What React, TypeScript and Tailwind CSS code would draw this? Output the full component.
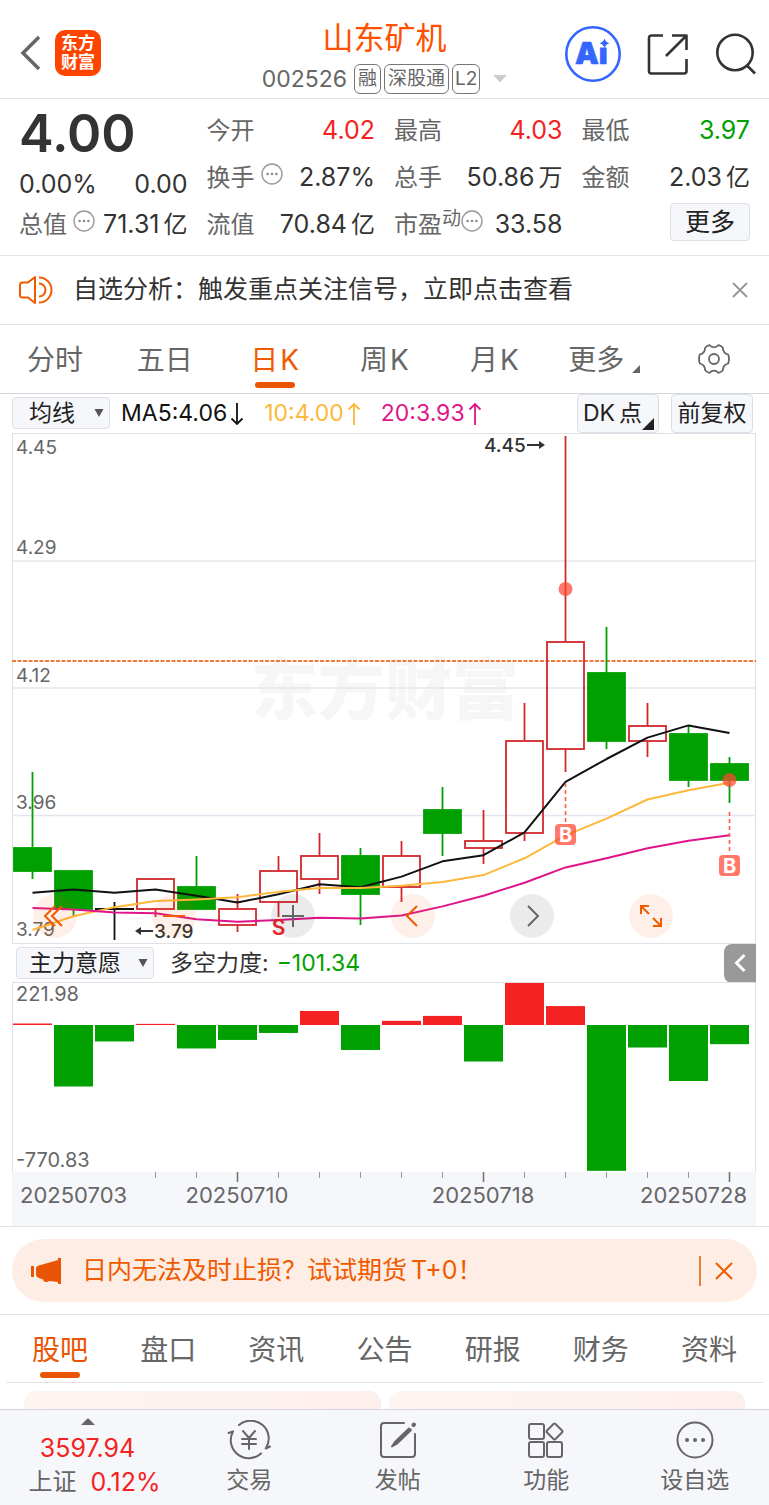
import { useState } from "react";
import type { ReactNode } from "react";

interface Candle {
  open: number;
  close: number;
  high: number;
  low: number;
}

const candles: Candle[] = [
  { open: 3.91, close: 3.88, high: 4.01, low: 3.87 },
  { open: 3.88, close: 3.83, high: 3.88, low: 3.82 },
  { open: 3.83, close: 3.83, high: 3.84, low: 3.79 },
  { open: 3.83, close: 3.87, high: 3.87, low: 3.82 },
  { open: 3.86, close: 3.83, high: 3.9, low: 3.83 },
  { open: 3.81, close: 3.83, high: 3.85, low: 3.8 },
  { open: 3.84, close: 3.88, high: 3.9, low: 3.82 },
  { open: 3.87, close: 3.9, high: 3.93, low: 3.85 },
  { open: 3.9, close: 3.85, high: 3.91, low: 3.81 },
  { open: 3.86, close: 3.9, high: 3.92, low: 3.84 },
  { open: 3.96, close: 3.93, high: 3.99, low: 3.9 },
  { open: 3.91, close: 3.92, high: 3.96, low: 3.89 },
  { open: 3.93, close: 4.05, high: 4.1, low: 3.92 },
  { open: 4.04, close: 4.18, high: 4.45, low: 4.01 },
  { open: 4.14, close: 4.05, high: 4.2, low: 4.04 },
  { open: 4.05, close: 4.07, high: 4.1, low: 4.03 },
  { open: 4.06, close: 4.0, high: 4.07, low: 3.99 },
  { open: 4.02, close: 4.0, high: 4.03, low: 3.97 },
];

const ma5 = [3.852, 3.856, 3.852, 3.856, 3.848, 3.839, 3.85, 3.863, 3.859, 3.873, 3.893, 3.901, 3.931, 3.997, 4.027, 4.055, 4.071, 4.061];
const ma10 = [3.803, 3.821, 3.833, 3.841, 3.843, 3.846, 3.853, 3.858, 3.858, 3.861, 3.866, 3.875, 3.897, 3.927, 3.949, 3.974, 3.986, 3.996];
const ma20 = [3.832, 3.83, 3.826, 3.825, 3.817, 3.814, 3.816, 3.819, 3.818, 3.822, 3.834, 3.848, 3.865, 3.885, 3.897, 3.91, 3.92, 3.927];

const forces = [8, -325, -87, 6, -124, -79, -42, 74, -132, 22, 48, -193, 221.98, 100, -770.83, -119, -296, -101.34];

const periods = ["分时", "五日", "日K", "周K", "月K"];
const sections = ["股吧", "盘口", "资讯", "公告", "研报", "财务", "资料"];

const xAt = (i: number) => 20 + i * 41;
const priceY = (p: number) => Math.round(3 + (4.45 - p) * 763.6);
const linePoints = (data: number[]) =>
  data.map((p, i) => `${xAt(i) + 0.5},${3 + (4.45 - p) * 763.6}`).join(" ");

function MoreDots() {
  return (
    <svg className="mb-2 h-[22px] w-[22px] shrink-0" viewBox="0 0 22 22" aria-hidden="true">
      <circle cx="11" cy="11" r="10" fill="none" stroke="#999" strokeWidth="1.4" />
      <circle cx="6.6" cy="11" r="1.3" fill="#888" />
      <circle cx="11" cy="11" r="1.3" fill="#888" />
      <circle cx="15.4" cy="11" r="1.3" fill="#888" />
    </svg>
  );
}

function MaArrow({ down = false }: { down?: boolean }) {
  return (
    <svg className="h-6 w-[17px]" viewBox="0 0 17 24" fill="none" stroke="currentColor" strokeWidth="1.8" aria-hidden="true">
      {down ? <path d="M10 1v21M4.500 16.500l5.500 5.500 5.500-5.500" /> : <path d="M10 23V2M4.500 7.500L10 2l5.500 5.500" />}
    </svg>
  );
}

interface StatProps {
  label: string;
  value: string;
  unit?: string;
  sup?: string;
  dots?: boolean;
  color?: string;
}

function Stat({ label, value, unit, sup, dots, color = "text-[#333]" }: StatProps) {
  return (
    <div className="flex h-[47px] items-center justify-between whitespace-nowrap">
      <span className="flex items-center text-[#666]">
        {label}
        {sup && <span className="mb-3 text-[19px] leading-6">{sup}</span>}
        {dots && <span className={sup ? "" : "ml-1.5"}><MoreDots /></span>}
      </span>
      <span className={`text-[25px] ${color}`}>
        {value}
        {unit && <span className="ml-1 text-[24px]">{unit}</span>}
      </span>
    </div>
  );
}

interface DropdownProps {
  label: string;
  options: string[];
  className: string;
}

function Dropdown({ label, options, className }: DropdownProps) {
  return (
    <div className="relative">
      <select
        aria-label={label}
        className={`h-8 appearance-none rounded border border-[#dcdfe6] bg-[#f6f7fa] text-[23px] leading-[30px] text-[#222] ${className}`}
      >
        {options.map((o) => (
          <option key={o}>{o}</option>
        ))}
      </select>
      <svg className="pointer-events-none absolute right-1.5 top-3 h-2.5 w-2.5" viewBox="0 0 10 10" aria-hidden="true">
        <path d="M0.500 1h9L5 9z" fill="#555" />
      </svg>
    </div>
  );
}

function KLineChart() {
  return (
    <svg className="block h-auto w-full" viewBox="0 0 745 511" role="img" aria-label="日K线图">
      <text x="239" y="281" fontSize="67" fontWeight="900" fill="#f6f6f7">东方财富</text>
      <g stroke="#e3e6ee" strokeWidth="1.500" fill="none">
        <rect x="0.500" y="0.500" width="743" height="510" stroke="#dfe1e6" strokeWidth="1" />
        <path d="M0 128H744M0 255H744M0 382.500H744" />
      </g>
      <path d="M0 228H744" stroke="#ee7a3c" strokeWidth="1.800" strokeDasharray="4 1.500" />

      <g fontSize="19" fill="#666">
        <text x="4" y="21">4.45</text>
        <text x="4" y="121">4.29</text>
        <text x="4" y="249">4.12</text>
        <text x="4" y="376">3.96</text>
        <text x="4" y="503">3.79</text>
      </g>

      {candles.map((c, i) => {
        const x = xAt(i);
        const top = priceY(Math.max(c.open, c.close));
        const bottom = priceY(Math.min(c.open, c.close));
        if (c.open === c.close) {
          return (
            <path key={i} d={`M${x - 19} ${top}h39M${x + 0.5} ${priceY(c.high)}V${priceY(c.low)}`} stroke="#111" strokeWidth="1.800" />
          );
        }
        const up = c.close > c.open;
        const color = up ? "#d2282c" : "#00a000";
        return (
          <g key={i} stroke={color} strokeWidth="1.800">
            <path d={`M${x + 0.5} ${priceY(c.high)}V${top}M${x + 0.5} ${bottom}V${priceY(c.low)}`} />
            <rect x={x - 18} y={top} width="37" height={bottom - top} fill={up ? "none" : color} />
          </g>
        );
      })}

      <g fill="none" strokeWidth="2" strokeLinejoin="round">
        <polyline points={linePoints(ma5)} stroke="#111" />
        <polyline points={linePoints(ma10)} stroke="#fdb83a" />
        <polyline points={linePoints(ma20)} stroke="#e0148a" />
      </g>

      {/* buy and sell signals */}
      <g stroke="#ff5a45" strokeWidth="1.600" strokeDasharray="4 3">
        <path d="M553.500 350V391M717.500 379V420" />
      </g>
      <g fill="#ff4530" fillOpacity="0.720">
        <circle cx="553.500" cy="156" r="7" />
        <circle cx="717.500" cy="347" r="7" />
        <rect x="543" y="391" width="21" height="21" rx="4" />
        <rect x="707" y="422" width="21" height="21" rx="4" />
      </g>
      <g fontSize="20" fontWeight="700" fill="#fff" textAnchor="middle">
        <text x="553.500" y="409">B</text>
        <text x="717.500" y="440">B</text>
      </g>
      <text x="266.500" y="502" fontSize="21" fontWeight="600" fill="#f5222d" textAnchor="middle">S</text>

      {/* high and low marks */}
      <g fontSize="19" fontWeight="500" fill="#333">
        <text x="472" y="19">4.45</text>
        <text x="142" y="505">3.79</text>
      </g>
      <g stroke="#333" strokeWidth="1.800">
        <path d="M515 12h12M128 498h13" />
        <path d="M533 12l-6-4v8zM123 498l6-4v8z" fill="#333" strokeWidth="0" />
      </g>
    </svg>
  );
}

function ForceChart() {
  const zero = 43;
  const scale = 0.1892;
  return (
    <svg className="block h-auto w-full" viewBox="0 0 745 244" role="img" aria-label="多空力度">
      <path d="M0.500 190V0.500H743.500V190" fill="none" stroke="#dfe1e6" />
      <rect x="0" y="190" width="744" height="54" fill="#f6f7fa" />
      {forces.map((f, i) => {
        const h = Math.abs(f) * scale;
        return (
          <rect key={i} x={xAt(i) - 19} y={f > 0 ? zero - h : zero} width="39" height={h} fill={f > 0 ? "#f42222" : "#00a000"} />
        );
      })}
      {forces.map((_, i) =>
        i < 3 ? null : (
          <path key={i} d={`M${xAt(i) + 0.5} 190v${i % 6 === 5 ? 10 : 6}`} stroke={i % 6 === 5 ? "#777" : "#999"} strokeWidth={i % 6 === 5 ? 1.6 : 1} />
        )
      )}
      <g fontSize="20" fill="#666">
        <text x="4" y="19">221.98</text>
        <text x="4" y="185">-770.83</text>
      </g>
      <g fontSize="22" fill="#666">
        <text x="8" y="221">20250703</text>
        <text x="225" y="221" textAnchor="middle">20250710</text>
        <text x="471" y="221" textAnchor="middle">20250718</text>
        <text x="735" y="221" textAnchor="end">20250728</text>
      </g>
    </svg>
  );
}

function ChartTool({ name, gray = false, children }: { name: string; gray?: boolean; children: ReactNode }) {
  return (
    <button
      aria-label={name}
      className={`flex h-11 w-11 items-center justify-center rounded-full ${gray ? "bg-black/8 text-[#666]" : "bg-[#f05a00]/9 text-[#f05a00]"}`}
    >
      <svg className="h-6 w-6" viewBox="0 0 24 24" fill="none" stroke="currentColor" strokeWidth="2">
        {children}
      </svg>
    </button>
  );
}

function NavItem({ label, children }: { label: string; children: ReactNode }) {
  return (
    <button className="flex flex-col items-center pt-2.5">
      <svg className="h-10 w-11" viewBox="0 0 44 40" fill="none" stroke="#666" strokeWidth="2" strokeLinecap="round" strokeLinejoin="round">
        {children}
      </svg>
      <span className="mt-1 text-[23px] leading-8 text-[#666]">{label}</span>
    </button>
  );
}

export default function App() {
  const [period, setPeriod] = useState("日K");
  const [section, setSection] = useState("股吧");

  return (
    <div className="w-full bg-white font-['Inter','Noto_Sans_CJK_SC',sans-serif] text-[24px] text-[#333]">
      {/* Header */}
      <header className="grid h-[99px] grid-cols-[1fr_auto_1fr] border-b border-[#e4e4e6]">
        <div className="flex items-center gap-3.5 pl-5 pt-2">
          <button aria-label="返回">
            <svg className="h-9 w-[21px]" viewBox="0 0 21 36" fill="none" stroke="#666" strokeWidth="3.500">
              <path d="M19 2L3 18l16 16" />
            </svg>
          </button>
          <a href="#home" className="flex h-[46px] w-[46px] flex-col items-center justify-center rounded-[10px] bg-[#ff4400] text-[17px] font-bold leading-[19px] text-white">
            <span>东方</span>
            <span>财富</span>
          </a>
        </div>
        <div className="flex flex-col items-center pt-4">
          <h1 className="text-[31px] leading-[44px] text-[#ff5000]">山东矿机</h1>
          <div className="flex items-center gap-[3px] whitespace-nowrap pt-1 text-[19px] leading-7 text-[#666]">
            <span className="mr-1 text-[23px]">002526</span>
            <span className="rounded-md border border-[#777] px-[3px]">融</span>
            <span className="rounded-md border border-[#777] px-[3px]">深股通</span>
            <span className="rounded-md border border-[#777] px-[2px]">L2</span>
            <svg className="ml-2.5 h-2 w-3.5" viewBox="0 0 14 8" aria-hidden="true">
              <path d="M0 0h14L7 7.500z" fill="#ccc" />
            </svg>
          </div>
        </div>
        <div className="flex items-center justify-end gap-[26px] pr-3 pt-2.5">
          <button aria-label="AI 助手">
            <svg className="h-14 w-14" viewBox="0 0 56 56">
              <circle cx="28" cy="28" r="26.700" fill="#fff" stroke="#3366ff" strokeWidth="2.600" />
              <text x="10" y="38" fontSize="30" fontWeight="900" fill="#3366ff" stroke="#3366ff" strokeWidth="0.600">Ai</text>
              <path d="M33 12h14v9.500H33z" fill="#fff" />
              <path d="M39.500 12.500q1 3.700 5 4.800-4 1.200-5 4.800-1-3.600-5-4.800 4-1.100 5-4.800z" fill="#3366ff" />
            </svg>
          </button>
          <button aria-label="分享">
            <svg className="h-[42px] w-[42px]" viewBox="0 0 42 42" fill="none" stroke="#333" strokeWidth="2.600" strokeLinejoin="round">
              <path d="M16 2.500H4.500Q2 2.500 2 5v33q0 2.500 2.500 2.500H37q2.500 0 2.500-2.500V26" />
              <path d="M25 2.500h14.500V17M39 3L19 23" />
            </svg>
          </button>
          <button aria-label="搜索">
            <svg className="h-[42px] w-[42px]" viewBox="0 0 42 42" fill="none" stroke="#333" strokeWidth="2.600">
              <circle cx="20" cy="19.500" r="17.700" />
              <path d="M31.500 32L40 40.500" />
            </svg>
          </button>
        </div>
      </header>

      {/* Quote */}
      <section className="grid grid-cols-4 gap-x-[19px] border-b border-[#e4e4e6] px-[19px] pb-[7px] pt-2">
        <div>
          <div className="h-[54px] text-[52px] font-semibold leading-[54px]">4.00</div>
          <div className="flex h-10 items-end justify-between pb-0.5 text-[25px] leading-[30px]">
            <span>0.00%</span>
            <span>0.00</span>
          </div>
          <Stat label="总值" value="71.31" unit="亿" dots />
        </div>
        <div>
          <Stat label="今开" value="4.02" color="text-[#f42222]" />
          <Stat label="换手" value="2.87%" dots />
          <Stat label="流值" value="70.84" unit="亿" />
        </div>
        <div>
          <Stat label="最高" value="4.03" color="text-[#f42222]" />
          <Stat label="总手" value="50.86" unit="万" />
          <Stat label="市盈" sup="动" value="33.58" dots />
        </div>
        <div>
          <Stat label="最低" value="3.97" color="text-[#00a000]" />
          <Stat label="金额" value="2.03" unit="亿" />
          <div className="flex h-[47px] items-center justify-end pb-1.5">
            <button className="h-[38px] w-20 rounded border border-[#dcdfe6] bg-[#f6f7fa] text-[25px] leading-[34px] text-[#222]">更多</button>
          </div>
        </div>
      </section>

      {/* Signal notice */}
      <section className="flex h-[69px] items-center border-b border-[#e4e4e6] pl-[19px] pr-5">
        <svg className="h-[30px] w-[34px]" viewBox="0 0 34 30" fill="none" stroke="#f05a00" strokeWidth="2" strokeLinejoin="round" aria-hidden="true">
          <path d="M16 2v26l-7-5.500H3.500Q1 22.500 1 20v-10q0-2.500 2.500-2.500H9z" />
          <path d="M20 8.500a6.500 6.500 0 0 1 0 13M20 2.500a12.500 12.500 0 0 1 0 25" />
        </svg>
        <a href="#signal" className="ml-5 text-[25px]">自选分析：触发重点关注信号，立即点击查看</a>
        <button aria-label="关闭提示" className="ml-auto">
          <svg className="h-[18px] w-[18px]" viewBox="0 0 18 18" stroke="#999" strokeWidth="2">
            <path d="M2 2l14 14M16 2L2 16" />
          </svg>
        </button>
      </section>

      {/* Period tabs */}
      <nav className="grid h-[69px] grid-cols-7 border-b border-[#d4d6db] text-[28px] text-[#666]">
        {periods.map((p) => (
          <button key={p} onClick={() => setPeriod(p)} className={`flex flex-col items-center pt-[13px] ${period === p ? "text-[#f05a00]" : ""}`}>
            <span className="leading-[44px]">
              {p[0]}
              <span className={p[1] === "K" ? "ml-0.5" : ""}>{p[1]}</span>
            </span>
            {period === p && <span className="h-1.5 w-10 rounded-full bg-[#ea5504]" />}
          </button>
        ))}
        <button className="flex items-start justify-center gap-2 pt-[13px]">
          <span className="leading-[44px]">更多</span>
          <svg className="mt-[27px] h-2 w-2" viewBox="0 0 8 8" aria-hidden="true">
            <path d="M8 0v8H0z" fill="#666" />
          </svg>
        </button>
        <button aria-label="设置" className="flex items-center justify-center">
          <svg className="h-8 w-8" viewBox="0 0 32 32" fill="none" stroke="#666" strokeWidth="1.800" strokeLinejoin="round">
            <circle cx="16" cy="16" r="5" />
            <path d="M11.500 2.200q2.200 2.200 4.500 2.200t4.500-2.200q2.800.6 4.300 2.600.3 3 1.600 4.500t3.800 2.200q1.500 4.500 0 9-2.500.7-3.800 2.200t-1.600 4.500q-1.500 2-4.300 2.600-2.200-2.200-4.500-2.200t-4.500 2.200q-2.800-.6-4.300-2.600-.3-3-1.600-4.500t-3.800-2.200q-1.500-4.500 0-9 2.500-.7 3.800-2.200t1.600-4.500q1.500-2 4.300-2.600z" />
          </svg>
        </button>
      </nav>

      <main className="px-3">
        {/* Moving averages */}
        <div className="flex h-[39px] items-center whitespace-nowrap text-[23px]">
          <Dropdown label="主图指标" options={["均线", "布林线"]} className="w-[98px] pl-4" />
          <span className="ml-[11px] flex items-center text-[#111]">MA5:4.06<MaArrow down /></span>
          <span className="ml-5 flex items-center text-[#fdb83a]">10:4.00<MaArrow /></span>
          <span className="ml-5 flex items-center text-[#e0148a]">20:3.93<MaArrow /></span>
          <button className="ml-auto flex h-[39px] w-[82px] items-center rounded border border-[#dcdfe6] bg-[#f6f7fa] pl-[5px] text-[#222]">
            DK<span className="ml-1">点</span>
            <svg className="mt-5 h-3 w-3" viewBox="0 0 12 12" aria-hidden="true">
              <path d="M12 0v12H0z" fill="#222" />
            </svg>
          </button>
          <button className="ml-3 mr-1 h-[39px] w-[82px] rounded border border-[#dcdfe6] bg-[#f6f7fa] text-[#222]">前复权</button>
        </div>

        <div className="relative">
          <KLineChart />
          <div className="absolute bottom-1.5 left-[21px] right-[84px] flex justify-between">
            <ChartTool name="最早">
              <path d="M12 2L2 12l10 10M19 2L9 12l10 10" />
            </ChartTool>
            <ChartTool name="缩小">
              <path d="M1 12h22" />
            </ChartTool>
            <ChartTool name="放大" gray>
              <path d="M1 12h22M12 1v22" />
            </ChartTool>
            <ChartTool name="左移">
              <path d="M16 2L6 12l10 10" />
            </ChartTool>
            <ChartTool name="右移" gray>
              <path d="M8 2l10 10L8 22" />
            </ChartTool>
            <ChartTool name="全屏">
              <path d="M2 10V2h8M2 2l8 8M22 14v8h-8M22 22l-8-8" />
            </ChartTool>
          </div>
        </div>

        {/* Sub indicator */}
        <div className="flex h-[38px] items-center whitespace-nowrap pl-1 pr-px text-[23px]">
          <Dropdown label="副图指标" options={["主力意愿", "成交量"]} className="w-[138px] pl-3" />
          <span className="ml-4">多空力度:</span>
          <span className="ml-2 text-[#00a000]">−101.34</span>
          <button aria-label="展开" className="ml-auto flex h-[39px] w-8 items-center justify-center rounded-l-lg bg-[#999]">
            <svg className="h-5 w-3" viewBox="0 0 12 20" fill="none" stroke="#fff" strokeWidth="3">
              <path d="M10.500 2L2.500 10l8 8" />
            </svg>
          </button>
        </div>

        <ForceChart />
      </main>

      {/* Promotion */}
      <section className="border-y border-[#e2e4ea] px-3 py-3">
        <div className="flex h-[63px] items-center rounded-full bg-[#fdede4] pl-[19px] pr-6 text-[#f05a00]">
          <svg className="h-[26px] w-[31px]" viewBox="0 0 31 26" fill="#ea5504" aria-hidden="true">
            <path d="M0 8h3v11H0zM5 9.500Q6 8 8 7.500L27 2V0h3v26h-3v-2l-9-1-1.500 1-3.500-.5-1-2L8 20Q5 19 5 17z" />
          </svg>
          <a href="#futures" className="ml-5 whitespace-nowrap text-[25px]">
            日内无法及时止损？试试期货<span className="ml-1">T+0！</span>
          </a>
          <span className="ml-auto mr-3.5 h-[30px] w-0.5 bg-[#ee7a3c]" />
          <button aria-label="关闭广告">
            <svg className="h-[18px] w-[18px]" viewBox="0 0 18 18" stroke="currentColor" strokeWidth="2">
              <path d="M1 1l16 16M17 1L1 17" />
            </svg>
          </button>
        </div>
      </section>

      {/* Section tabs */}
      <nav className="mx-1.5 grid h-[68px] grid-cols-7 border-b border-[#e2e4ea] text-[28px] text-[#666]">
        {sections.map((s) => (
          <button key={s} onClick={() => setSection(s)} className={`flex flex-col items-center pt-[13px] ${section === s ? "text-[#ea5504]" : ""}`}>
            <span className="leading-[44px]">{s}</span>
            {section === s && <span className="h-1.5 w-10 rounded-full bg-[#ea5504]" />}
          </button>
        ))}
      </nav>
      <div className="grid grid-cols-2 gap-2 px-6 pt-2">
        <div className="h-[18px] rounded-t-xl bg-linear-to-r from-[#fef5f2] to-[#fdefec]" />
        <div className="h-[18px] rounded-t-xl bg-linear-to-r from-[#fef5f2] to-[#fdefec]" />
      </div>

      {/* Bottom bar */}
      <footer className="grid h-24 grid-cols-[175px_repeat(4,1fr)] border-t border-[#d4d6db] bg-[#f6f7fa]">
        <button className="flex flex-col items-center pt-2 text-[25px] leading-[34px] text-[#f42222]">
          <svg className="h-[7px] w-3.5" viewBox="0 0 14 7" aria-hidden="true">
            <path d="M7 0l7 7H0z" fill="#666" />
          </svg>
          <span className="mt-1.5">3597.94</span>
          <span className="flex gap-3.5 pl-3.5">
            <span className="text-[24px] text-[#666]">上证</span>
            0.12%
          </span>
        </button>
        <NavItem label="交易">
          <path d="M12 5A18 18 0 0 1 38.800 28.500L43 26.500M34 33.400A18 18 0 0 1 6 11.500L1.500 13" />
          <path d="M16 11l6 7 6-7M15 19h14M15 24h14M22 18v11" />
        </NavItem>
        <NavItem label="发帖">
          <path d="M28 3H8Q5 3 5 6v28q0 3 3 3h28q3 0 3-3V14" />
          <path d="M33 8.500L19 22l-3 4.500 4.500-2.500L35 10z" fill="#666" />
          <path d="M37.500 5l.5-.5" strokeWidth="4" />
        </NavItem>
        <NavItem label="功能">
          <rect x="5" y="4" width="15" height="15" rx="2" />
          <rect x="5" y="22" width="15" height="15" rx="2" />
          <rect x="23" y="22" width="15" height="15" rx="2" />
          <path d="M29.500 4q1-1 2 0l6.500 6.500q1 1 0 2L31.500 19q-1 1-2 0L23 12.500q-1-1 0-2z" />
        </NavItem>
        <NavItem label="设自选">
          <circle cx="22" cy="20" r="17.500" />
          <path d="M14 20h.1M22 20h.1M30 20h.1" strokeWidth="4" />
        </NavItem>
      </footer>
    </div>
  );
}
